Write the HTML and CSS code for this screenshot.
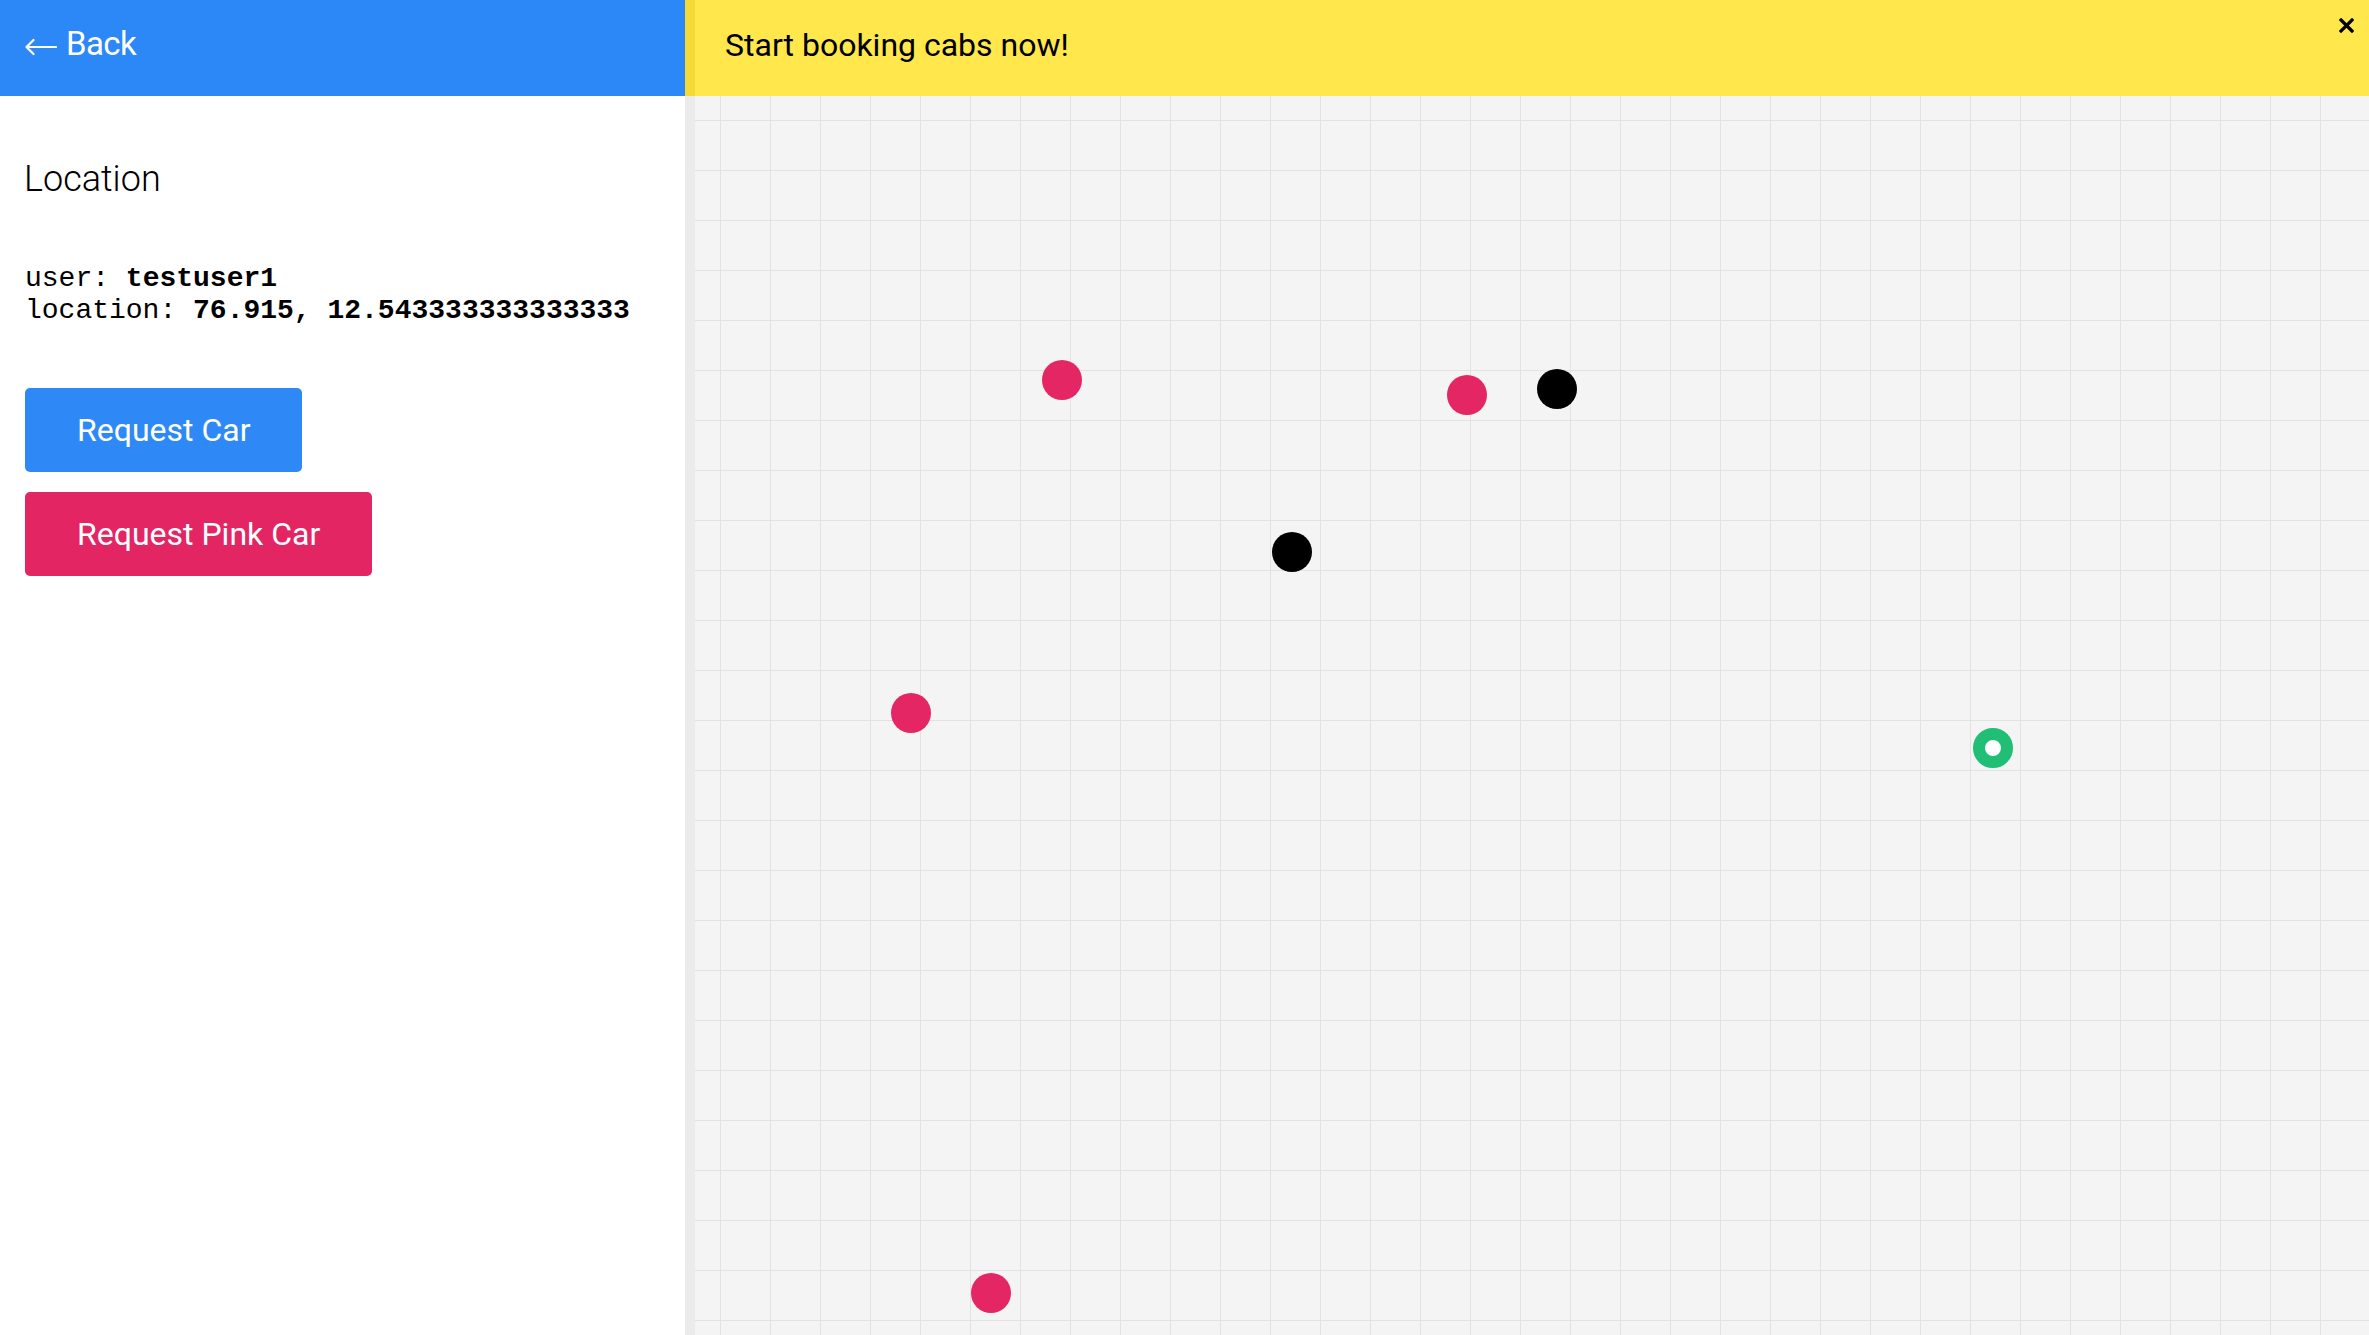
FILE: index.html
```html
<!DOCTYPE html>
<html>
<head>
<meta charset="utf-8">
<link rel="stylesheet" href="styles.css">
</head>
<body>
<div class="app">
  <aside class="sidebar">
    <header class="topbar">
      <svg class="back-arrow" width="32" height="18" viewBox="0 0 32 18"><path d="M1.5 9 H31 M1.5 9 L8.5 2 M1.5 9 L8.5 16" fill="none" stroke="#fff" stroke-width="2.2" stroke-linecap="round" stroke-linejoin="round"/></svg>
      <span class="back-label">Back</span>
    </header>
    <h2 class="title">Location</h2>
    <pre class="info">user: <b>testuser1</b>
location: <b>76.915, 12.543333333333333</b></pre>
    <div class="actions">
      <button class="btn btn-blue">Request Car</button>
      <button class="btn btn-pink">Request Pink Car</button>
    </div>
  </aside>
  <div class="divider"></div>
  <main class="map">
    <span class="dot pink" style="left:347px;top:360px"></span>
    <span class="dot pink" style="left:752px;top:375px"></span>
    <span class="dot black" style="left:842px;top:369px"></span>
    <span class="dot black" style="left:577px;top:532px"></span>
    <span class="dot pink" style="left:196px;top:693px"></span>
    <span class="dot ring" style="left:1278px;top:728px"></span>
    <span class="dot pink" style="left:276px;top:1273px"></span>
  </main>
  <div class="banner">
    <span class="banner-text">Start booking cabs now!</span>
    <svg class="close" width="15" height="15" viewBox="0 0 15 15"><path d="M2 2 L13 13 M13 2 L2 13" stroke="#000" stroke-width="3.2" stroke-linecap="square"/></svg>
  </div>
</div>
</body>
</html>
```

FILE: styles.css
```css
* { box-sizing: border-box; }
html, body { margin: 0; padding: 0; height: 100%; }
body {
  font-family: Roboto, "Liberation Sans", sans-serif;
  background: #ffffff;
  overflow: hidden;
}
.app {
  position: relative;
  display: flex;
  width: 2369px;
  height: 1335px;
}
.sidebar {
  width: 685px;
  flex: none;
  display: flex;
  flex-direction: column;
  background: #ffffff;
}
.topbar {
  height: 96px;
  background: #2c87f7;
  color: #ffffff;
  display: flex;
  align-items: flex-start;
  padding: 24px 0 0 25px;
  gap: 9px;
}
.back-arrow {
  margin-top: 14px;
  flex: none;
}
.back-label {
  font-size: 33px;
  line-height: 40px;
  font-weight: 400;
  letter-spacing: -0.6px;
}
.title {
  margin: 62px 0 0 0;
  padding-left: 24px;
  font-size: 36px;
  line-height: 42px;
  font-weight: 300;
  color: #000;
}
.info {
  margin: 63px 0 0 0;
  padding-left: 25px;
  font-family: "Liberation Mono", "Courier New", monospace;
  font-size: 28px;
  line-height: 32px;
  color: #000;
}
.info b { font-weight: 700; }
.actions {
  margin-top: 61px;
  padding-left: 25px;
  display: flex;
  flex-direction: column;
  align-items: flex-start;
  gap: 20px;
}
.btn {
  height: 84px;
  padding: 0 52px;
  border: none;
  border-radius: 5px;
  color: #ffffff;
  font-family: Roboto, "Liberation Sans", sans-serif;
  font-size: 32px;
  font-weight: 400;
  display: flex;
  align-items: center;
  justify-content: center;
}
.btn-blue { background: #2e88f6; }
.btn-pink { background: #e32563; }
.divider {
  width: 10px;
  flex: none;
  background: #ebebeb;
}
.map {
  position: relative;
  flex: 1;
  background-color: #f4f4f4;
  background-image:
    linear-gradient(to right, #e2e2e2 1px, transparent 1px),
    linear-gradient(to bottom, #e2e2e2 1px, transparent 1px);
  background-size: 50px 50px;
  background-position: 25px 20px;
}
.dot {
  position: absolute;
  width: 40px;
  height: 40px;
  border-radius: 50%;
}
.dot.pink { background: #e52664; }
.dot.black { background: #000000; }
.dot.ring {
  background: #ffffff;
  border: 12px solid #20bf75;
}
.banner {
  position: absolute;
  left: 685px;
  top: 0;
  right: 0;
  height: 96px;
  background: linear-gradient(to right, #f5d936 0, #f5d936 10px, #ffe74c 10px);
  padding: 26px 0 0 40px;
}
.banner-text {
  font-size: 32px;
  line-height: 38px;
  color: #000;
}
.close {
  position: absolute;
  top: 18px;
  right: 15px;
}
```
